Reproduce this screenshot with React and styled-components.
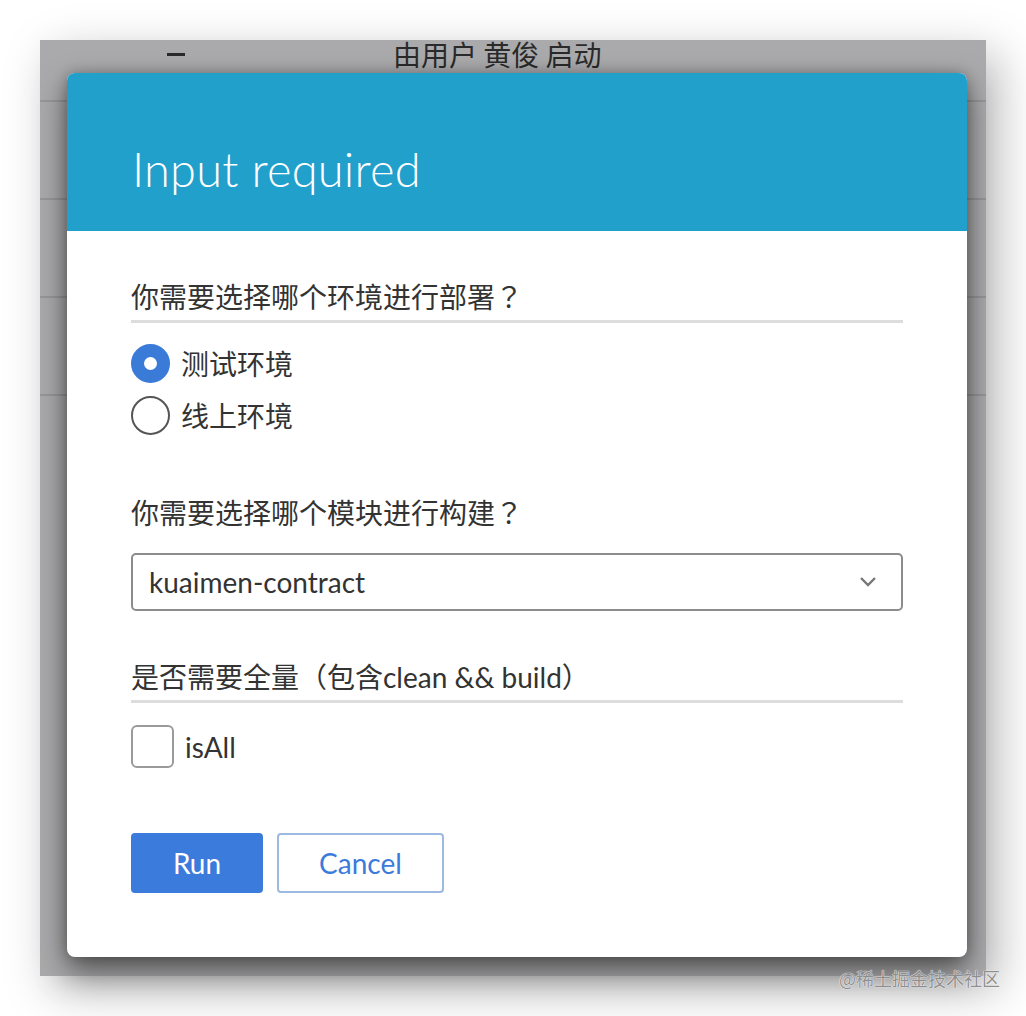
import styled, { createGlobalStyle } from "styled-components";

const GlobalStyle = createGlobalStyle`
  html, body {
    margin: 0;
    padding: 0;
    background: #ffffff;
  }
  body {
    font-family: Lato, "Noto Sans CJK SC", sans-serif;
  }
`;

const Page = styled.div`
  position: relative;
  width: 1026px;
  height: 1016px;
  padding: 40px;
  box-sizing: border-box;
  overflow: hidden;
`;

const Backdrop = styled.div`
  position: relative;
  width: 946px;
  height: 936px;
  background: #aaaaac;
  box-shadow: 12px 14px 44px rgba(0, 0, 0, 0.28);
  display: flex;
  flex-direction: column;
`;

const TopRow = styled.div`
  height: 60px;
  border-bottom: 2px solid #979799;
  display: flex;
  align-items: flex-start;
  font-family: "Noto Sans CJK SC", sans-serif;
  font-size: 28px;
  color: #2a2a2a;
  line-height: 28px;
`;

const Dash = styled.span`
  margin: 13px 0 0 127px;
  width: 18px;
  height: 3px;
  background: #2a2a2a;
`;

const Starter = styled.span`
  margin-left: 208px;
`;

const TableRow = styled.div`
  height: 96px;
  border-bottom: 2px solid #979799;
`;

const Modal = styled.div`
  position: absolute;
  left: 27px;
  top: 33px;
  width: 900px;
  height: 884px;
  background: #ffffff;
  border-radius: 8px;
  overflow: hidden;
  box-shadow: 0 14px 30px rgba(0, 0, 0, 0.5), 0 0 14px rgba(0, 0, 0, 0.25);
  display: flex;
  flex-direction: column;
`;

const Header = styled.div`
  height: 160px;
  box-sizing: border-box;
  background: #21a0cc;
  padding: 34px 0 0 65px;
  display: flex;
  align-items: center;
`;

const Title = styled.h1`
  margin: 0;
  font-family: Lato, sans-serif;
  font-weight: 300;
  font-size: 47px;
  color: #ffffff;
  letter-spacing: 0.2px;
`;

const Body = styled.div`
  padding: 0 64px 64px 64px;
  display: flex;
  flex-direction: column;
`;

const Label = styled.div`
  margin-top: ${(p) => p.$top}px;
  font-family: Lato, "Noto Sans CJK SC", sans-serif;
  font-size: 28px;
  line-height: 32px;
  color: #333333;
  padding-bottom: ${(p) => (p.$line ? 7 : 0)}px;
  border-bottom: ${(p) => (p.$line ? "3px solid #dddddd" : "none")};
`;

const Punct = styled.span`
  font-family: "Noto Sans CJK TC", sans-serif;
`;

const RadioList = styled.div`
  margin-top: 21px;
  display: flex;
  flex-direction: column;
  gap: 13px;
`;

const Option = styled.label`
  display: flex;
  align-items: center;
  gap: 11px;
  font-family: "Noto Sans CJK SC", sans-serif;
  font-size: 28px;
  line-height: 39px;
  color: #333333;
`;

const RadioDot = styled.span`
  width: 39px;
  height: 39px;
  box-sizing: border-box;
  border-radius: 50%;
  border: ${(p) => (p.$on ? "13px solid #3b7bd8" : "2px solid #555555")};
  background: #ffffff;
`;

const Select = styled.div`
  margin-top: 24px;
  height: 58px;
  box-sizing: border-box;
  border: 2px solid #8c8c8c;
  border-radius: 5px;
  display: flex;
  align-items: center;
  justify-content: space-between;
  padding: 0 24px 0 16px;
  font-family: Lato, sans-serif;
  font-size: 28px;
  color: #333333;
`;

const CheckRow = styled.label`
  margin-top: 22px;
  display: flex;
  align-items: center;
  gap: 11px;
  font-family: Lato, sans-serif;
  font-size: 28px;
  color: #333333;
`;

const CheckBox = styled.span`
  width: 43px;
  height: 43px;
  box-sizing: border-box;
  border: 2px solid #9a9a9a;
  border-radius: 6px;
  background: #ffffff;
`;

const Actions = styled.div`
  margin-top: 65px;
  display: flex;
  gap: 14px;
`;

const Button = styled.button`
  height: 60px;
  width: ${(p) => p.$w}px;
  box-sizing: border-box;
  border-radius: 4px;
  font-family: Lato, sans-serif;
  font-size: 28px;
  cursor: pointer;
  background: ${(p) => (p.$primary ? "#3b7bdb" : "#ffffff")};
  color: ${(p) => (p.$primary ? "#ffffff" : "#3b7bdb")};
  border: 2px solid ${(p) => (p.$primary ? "#3b7bdb" : "#9cb9e2")};
`;

const Watermark = styled.div`
  position: absolute;
  right: 26px;
  bottom: 25px;
  font-family: "Noto Sans CJK SC", sans-serif;
  font-size: 18px;
  color: #8e8e8e;
  text-shadow: 0 0 1px #ffffff, 0 0 1px #ffffff;
`;

const Chevron = () => (
  <svg width="18" height="12" viewBox="0 0 18 12" fill="none">
    <path d="M2 2 L9 9 L16 2" stroke="#777777" strokeWidth="2.4" />
  </svg>
);

export default function App() {
  return (
    <>
      <GlobalStyle />
      <Page>
        <Backdrop>
          <TopRow>
            <Dash />
            <Starter>由用户 黄俊 启动</Starter>
          </TopRow>
          <TableRow />
          <TableRow />
          <TableRow />

          <Modal>
            <Header>
              <Title>Input required</Title>
            </Header>
            <Body>
              <Label $top={49} $line>
                你需要选择哪个环境进行部署<Punct>？</Punct>
              </Label>
              <RadioList>
                <Option>
                  <RadioDot $on />
                  测试环境
                </Option>
                <Option>
                  <RadioDot />
                  线上环境
                </Option>
              </RadioList>

              <Label $top={61}>
                你需要选择哪个模块进行构建<Punct>？</Punct>
              </Label>
              <Select>
                <span>kuaimen-contract</span>
                <Chevron />
              </Select>

              <Label $top={50} $line>
                是否需要全量（包含clean &amp;&amp; build）
              </Label>
              <CheckRow>
                <CheckBox />
                isAll
              </CheckRow>

              <Actions>
                <Button $primary $w={132}>
                  Run
                </Button>
                <Button $w={167}>Cancel</Button>
              </Actions>
            </Body>
          </Modal>
        </Backdrop>
        <Watermark>@稀土掘金技术社区</Watermark>
      </Page>
    </>
  );
}
